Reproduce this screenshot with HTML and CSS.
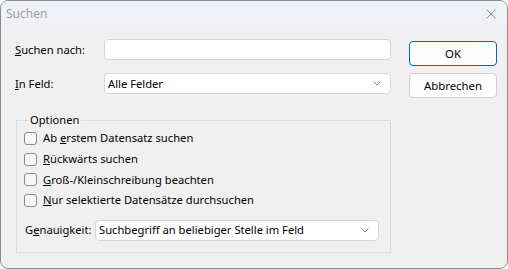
FILE: index.html
```html
<!DOCTYPE html>
<html lang="de">
<head>
    <meta charset="UTF-8">
    <title>Suchen</title>
    <link rel="stylesheet" href="styles.css">
</head>
<body>
    <div class="dialog">
        <div class="title-bar">
            <span class="title">Suchen</span>
            <svg class="close-icon" width="10" height="10" viewBox="0 0 10 10">
                <path d="M0.5 0.5L9.5 9.5M9.5 0.5L0.5 9.5" stroke="#8a8a8a" stroke-width="1"/>
            </svg>
        </div>

        <div class="dialog-body">
            <div class="form-col">
                <div class="form-row">
                    <label class="row-label"><u>S</u>uchen nach:</label>
                    <div class="text-input"></div>
                </div>
                <div class="form-row row-gap">
                    <label class="row-label"><u>I</u>n Feld:</label>
                    <div class="combo">
                        <span>Alle Felder</span>
                        <svg class="chevron" width="8" height="5" viewBox="0 0 8 5">
                            <path d="M0.5 0.5L4 4L7.5 0.5" fill="none" stroke="#8a8a8a" stroke-width="1"/>
                        </svg>
                    </div>
                </div>

                <fieldset class="options">
                    <legend>Optionen</legend>
                    <div class="check-row"><span class="checkbox"></span><span>Ab <u>e</u>rstem Datensatz suchen</span></div>
                    <div class="check-row"><span class="checkbox"></span><span><u>R</u>ückwärts suchen</span></div>
                    <div class="check-row"><span class="checkbox"></span><span><u>G</u>roß-/Kleinschreibung beachten</span></div>
                    <div class="check-row"><span class="checkbox"></span><span><u>N</u>ur selektierte Datensätze durchsuchen</span></div>
                    <div class="form-row accuracy-row">
                        <label class="accuracy-label">G<u>e</u>nauigkeit:</label>
                        <div class="combo">
                            <span>Suchbegriff an beliebiger Stelle im Feld</span>
                            <svg class="chevron" width="8" height="5" viewBox="0 0 8 5">
                                <path d="M0.5 0.5L4 4L7.5 0.5" fill="none" stroke="#8a8a8a" stroke-width="1"/>
                            </svg>
                        </div>
                    </div>
                </fieldset>
            </div>

            <div class="button-col">
                <button class="btn btn-default">OK</button>
                <button class="btn">Abbrechen</button>
            </div>
        </div>
    </div>
</body>
</html>
```

FILE: styles.css
```css
* {
    margin: 0;
    padding: 0;
    box-sizing: border-box;
    font-family: 'Noto Sans', 'Liberation Sans', sans-serif;
}

body {
    background-color: #ffffff;
    color: #000;
    font-size: 11.2px;
    line-height: 16px;
}

.dialog {
    width: 508px;
    height: 269px;
    border: 1px solid #8c8c8c;
    border-radius: 8px;
    background-color: #f0f0f0;
    overflow: hidden;
}

.title-bar {
    height: 26px;
    background-color: #eff1f8;
    display: flex;
    align-items: center;
    justify-content: space-between;
    padding: 0 11px 0 5px;
    font-size: 12px;
}

.title {
    color: #a0a0a0;
}

.close-icon {
    display: block;
}

.dialog-body {
    display: grid;
    grid-template-columns: 376px 88px;
    column-gap: 18px;
    padding: 12px 10px 0 14px;
}

.form-row {
    display: flex;
    align-items: center;
    height: 21px;
}

.row-gap {
    margin-top: 13px;
}

.row-label {
    width: 89px;
}

.text-input,
.combo {
    flex: 1;
    height: 21px;
    background-color: #fff;
    border: 1px solid #d6d6d6;
    border-radius: 4px;
}

.combo {
    display: flex;
    align-items: center;
    justify-content: space-between;
    padding: 0 9px 0 3px;
}

.chevron {
    display: block;
}

.options {
    margin: 18px 0 0 1px;
    border: 1px solid #dadada;
    padding: 0 11px 11px 7px;
}

.options legend {
    margin-left: 4px;
    padding: 0 2px;
}

.check-row {
    display: flex;
    align-items: center;
    height: 20.7px;
    gap: 6px;
}

.checkbox {
    width: 13px;
    height: 13px;
    border: 1px solid #8a8a8a;
    border-radius: 3px;
    background-color: #f7f7f7;
}

.accuracy-row {
    margin-top: 9px;
}

.accuracy-label {
    width: 71px;
    padding-left: 1px;
}

.button-col {
    display: flex;
    flex-direction: column;
    gap: 7px;
    padding-top: 2px;
}

.btn {
    height: 25px;
    background-color: #fdfdfd;
    border: 1px solid #d0d0d0;
    border-radius: 4px;
    font-size: 11.4px;
    color: #000;
}

.btn-default {
    border-color: #0067c0;
}
```
